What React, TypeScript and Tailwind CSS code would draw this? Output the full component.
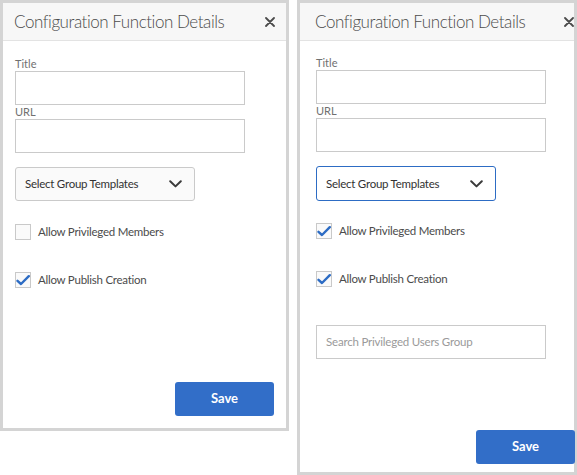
import React from "react";

function CloseIcon() {
  return (
    <svg width="10" height="10" viewBox="0 0 10 10" className="text-[#4b4b4b]">
      <path d="M1 1 L9 9 M9 1 L1 9" stroke="currentColor" strokeWidth="1.8" strokeLinecap="round" />
    </svg>
  );
}

function Chevron() {
  return (
    <svg width="13" height="8" viewBox="0 0 13 8" className="text-[#3a3a3a]">
      <path d="M1.2 1.2 L6.5 6.4 L11.8 1.2" fill="none" stroke="currentColor" strokeWidth="2" strokeLinecap="round" strokeLinejoin="round" />
    </svg>
  );
}

function Checkbox({ checked, label }: { checked: boolean; label: string }) {
  return (
    <label className="flex h-4 items-center gap-[7px]">
      <span className="flex h-4 w-4 shrink-0 items-center justify-center border border-[#c9c9c9] bg-[#fafafa]">
        {checked && (
          <svg width="14" height="11" viewBox="0 0 14 11" className="-ml-[1px] text-[#2d6cc4]">
            <path d="M1.5 5.8 L5 9 L12.8 1.2" fill="none" stroke="currentColor" strokeWidth="2.4" strokeLinecap="round" strokeLinejoin="round" />
          </svg>
        )}
      </span>
      <span className="text-[11.5px] leading-4 tracking-[-0.25px] text-[#4b4b4b]">{label}</span>
    </label>
  );
}

function Field({ label }: { label: string }) {
  return (
    <div className="flex flex-col">
      <span className="h-[15px] text-[11px] leading-[15px] text-[#707070]">{label}</span>
      <div className="h-[34px] w-[230px] border border-[#cacaca] bg-white" />
    </div>
  );
}

function Panel({ focused, privileged, right }: { focused: boolean; privileged: boolean; right: boolean }) {
  return (
    <div
      className={
        right
          ? "flex h-[475px] w-[280px] flex-col border-[3px] border-[#d4d4d4] bg-white"
          : "flex h-[431px] w-[289px] flex-col border-[3px] border-[#d4d4d4] bg-white"
      }
    >
      <div
        className={
          right
            ? "flex h-[38px] shrink-0 items-center justify-between border-b border-[#e3e3e3] bg-[#f7f7f7] pl-[15px]"
            : "flex h-[38px] shrink-0 items-center justify-between border-b border-[#e3e3e3] bg-[#f7f7f7] pl-[11px] pr-[11px]"
        }
      >
        <span className="text-[17px] font-light tracking-[-0.45px] text-[#4b4b4b]">Configuration Function Details</span>
        <CloseIcon />
      </div>
      <div className={right ? "flex flex-1 flex-col pl-[16px] pt-[14px]" : "flex flex-1 flex-col pl-[12px] pt-[15px]"}>
        <Field label="Title" />
        <div className="mt-[-1px]" />
        <Field label="URL" />
        <div
          className={
            focused
              ? "mt-[14px] flex h-[35px] w-[180px] items-center justify-between rounded-[3px] border border-[#2d6cc4] bg-white pl-[9px] pr-[12px]"
              : "mt-[14px] flex h-[34px] w-[180px] items-center justify-between rounded-[3px] border border-[#cacaca] bg-[#fafafa] pl-[9px] pr-[12px]"
          }
        >
          <span className="text-[11.5px] tracking-[-0.25px] text-[#323232]">Select Group Templates</span>
          <Chevron />
        </div>
        <div className={focused ? "mt-[22px]" : "mt-[23px]"}>
          <Checkbox checked={privileged} label="Allow Privileged Members" />
        </div>
        <div className="mt-[32px]">
          <Checkbox checked={true} label="Allow Publish Creation" />
        </div>
        {right && (
          <div className="mt-[38px] flex h-[34px] w-[230px] items-center border border-[#cacaca] bg-white pl-[9px]">
            <span className="text-[11.5px] tracking-[-0.2px] text-[#9a9a9a]">Search Privileged Users Group</span>
          </div>
        )}
        <div className={right ? "mt-auto mb-[8px] -mr-[1px] flex justify-end" : "mt-auto mb-[12px] flex justify-end pr-[12px]"}>
          <button className="h-[34px] w-[99px] rounded-[3px] bg-[#326ec8] text-[13px] font-bold text-white">
            Save
          </button>
        </div>
      </div>
    </div>
  );
}

export default function App() {
  return (
    <div className="flex h-[475px] w-[577px] overflow-hidden bg-white font-['Lato',sans-serif]">
      <Panel focused={false} privileged={false} right={false} />
      <div className="w-[8px]" />
      <Panel focused={true} privileged={true} right={true} />
    </div>
  );
}
